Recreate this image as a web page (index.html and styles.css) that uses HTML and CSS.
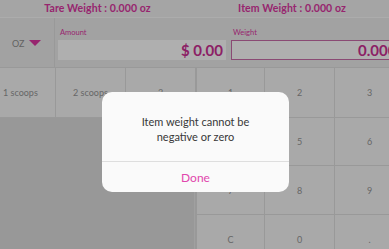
FILE: index.html
```html
<!DOCTYPE html>
<html>
<head>
<meta charset="utf-8">
<link rel="stylesheet" href="styles.css">
</head>
<body>
<div class="app">
  <header class="totals">
    <div class="total">Tare Weight : 0.000 oz</div>
    <div class="total">Item Weight : 0.000 oz</div>
  </header>
  <section class="inputs">
    <div class="unit">OZ <span class="caret"></span></div>
    <div class="field amount">
      <div class="label">Amount</div>
      <div class="box">$ 0.00</div>
    </div>
    <div class="field weight">
      <div class="label">Weight</div>
      <div class="box">0.000</div>
    </div>
  </section>
  <section class="pad">
    <div class="key scoop s1">1 scoops</div>
    <div class="key scoop s2">2 scoops</div>
    <div class="key scoop s3">3</div>
    <div class="filler"></div>
    <div class="key num">1</div>
    <div class="key num">2</div>
    <div class="key num">3</div>
    <div class="key num">4</div>
    <div class="key num">5</div>
    <div class="key num">6</div>
    <div class="key num">7</div>
    <div class="key num">8</div>
    <div class="key num">9</div>
    <div class="key num">C</div>
    <div class="key num">0</div>
    <div class="key num">.</div>
  </section>
</div>
<div class="backdrop">
  <div class="alert">
    <div class="message">Item weight cannot be<br>negative or zero</div>
    <div class="action">Done</div>
  </div>
</div>
</body>
</html>
```

FILE: styles.css
```css
html, body {
  margin: 0;
  padding: 0;
}
body {
  width: 389px;
  height: 249px;
  overflow: hidden;
  position: relative;
  font-family: "Lato", "Open Sans", sans-serif;
  background: #dadada;
}
.app {
  width: 389px;
  height: 249px;
  overflow: hidden;
}
.totals {
  display: grid;
  grid-template-columns: 195px 194px;
  height: 17px;
  background: #ececec;
  border-bottom: 1px solid #f6f6f6;
}
.total {
  display: flex;
  align-items: center;
  justify-content: center;
  color: #d9369f;
  font-weight: 700;
  font-size: 10.5px;
  letter-spacing: 0.1px;
  padding-bottom: 1px;
}
.inputs {
  display: grid;
  grid-template-columns: 55px 171px 163px;
  height: 49px;
  background: #e9e9e9;
}
.unit {
  display: flex;
  align-items: center;
  padding-left: 12px;
  gap: 5px;
  font-size: 9px;
  color: #8e8e8e;
  border-right: 1px solid #dcdcdc;
  padding-top: 1px;
}
.caret {
  width: 0;
  height: 0;
  border-left: 6px solid transparent;
  border-right: 6px solid transparent;
  border-top: 6px solid #d9369f;
}
.field {
  display: flex;
  flex-direction: column;
  padding-top: 10px;
}
.amount {
  padding-left: 3px;
}
.weight {
  padding-left: 5px;
}
.label {
  font-size: 7.5px;
  color: #d9369f;
  height: 12px;
  padding-left: 2px;
}
.box {
  height: 20px;
  box-sizing: border-box;
  background: #fbfbfb;
  color: #c92f91;
  font-weight: 700;
  font-size: 15px;
  display: flex;
  align-items: center;
  justify-content: flex-end;
  padding-right: 3px;
  white-space: nowrap;
}
.weight .box {
  width: 200px;
  border: 1px solid #c66aa6;
  justify-content: flex-start;
  padding-left: 126px;
}
.pad {
  display: grid;
  grid-template-columns: 55px 70px 70px 69px 70px 70px;
  grid-template-rows: 50px 48px 49px 49px;
  width: 404px;
  background: #f1f1f1;
}
.key {
  display: flex;
  align-items: center;
  justify-content: center;
  font-size: 9px;
  color: #949494;
  border-top: 1px solid #dcdcdc;
  border-left: 1px solid #dcdcdc;
  background: #f2f2f2;
}
.s1 {
  border-left: none;
  justify-content: flex-start;
  padding-left: 3px;
}
.filler {
  grid-column: 1 / 4;
  grid-row: 2 / 5;
  background: #dadada;
  border-top: 1px solid #dcdcdc;
  border-right: 1px solid #e6e6e6;
}
.pad .key:nth-child(5),
.pad .key:nth-child(8),
.pad .key:nth-child(11),
.pad .key:nth-child(14) {
  border-left: 2px solid #dcdcdc;
}
.backdrop {
  position: absolute;
  inset: 0;
  background: rgba(0, 0, 0, 0.3);
}
.alert {
  position: absolute;
  left: 102px;
  top: 92px;
  width: 187px;
  background: #fafafa;
  border-radius: 10px;
  font-family: "Lato", "Open Sans", sans-serif;
  text-align: center;
}
.message {
  padding: 22px 10px 17px;
  font-size: 11px;
  line-height: 15px;
  color: #383838;
  border-bottom: 1px solid #dedede;
}
.action {
  height: 30px;
  display: flex;
  align-items: center;
  justify-content: center;
  font-size: 12px;
  color: #e146ad;
}
```
